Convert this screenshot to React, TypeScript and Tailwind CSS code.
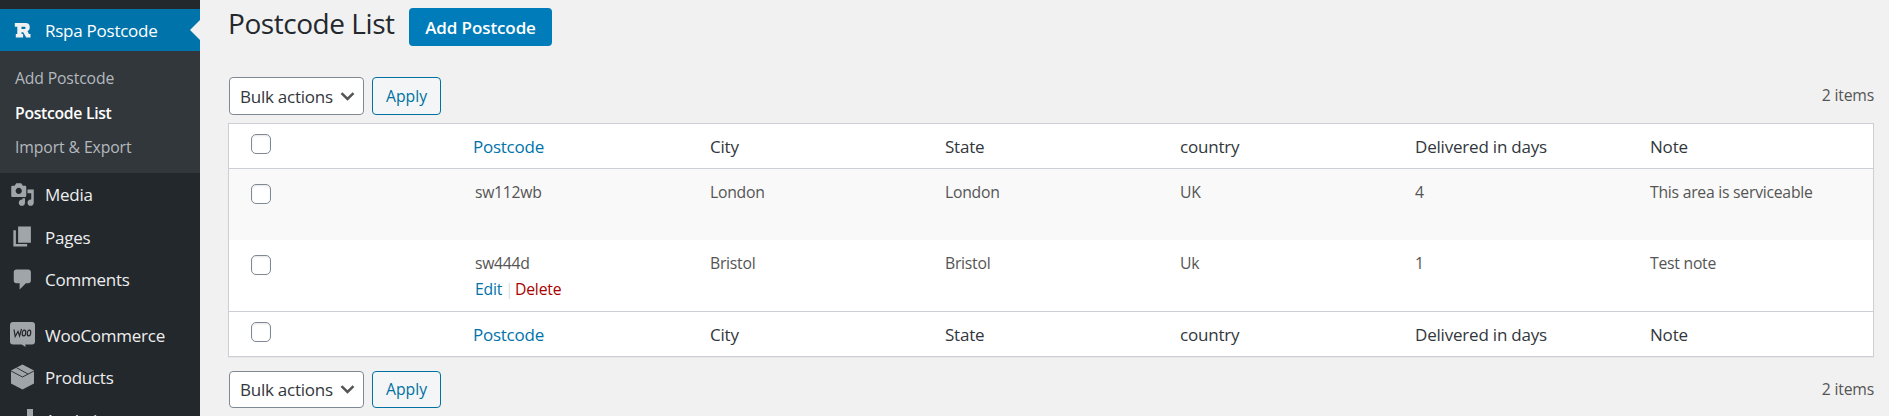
import type { ReactNode } from "react";

const columns = ["City", "State", "country", "Delivered in days", "Note"];

const Checkbox = ({ className }: { className: string }) => (
  <span
    className={`ml-[22px] block h-5 w-5 rounded-[5px] border border-[#7e8993] bg-white shadow-[inset_0_1px_2px_rgba(0,0,0,0.1)] ${className}`}
  />
);

const grid = "grid grid-cols-[237px_237px_235px_235px_235px_235px_1fr]";

function HeadRow() {
  return (
    <div className={`${grid} h-11 text-[17px] leading-[46px] text-[#32373c]`}>
      <Checkbox className="mt-2.5" />
      <span className="pl-[7px] tracking-[-0.25px] text-[#0073aa]">Postcode</span>
      {columns.map((c) => (
        <span key={c} className="pl-[7px] tracking-[-0.2px]">
          {c}
        </span>
      ))}
    </div>
  );
}

function Row({ cells, className, actions }: { cells: string[]; className: string; actions?: boolean }) {
  return (
    <div className={`${grid} h-[71px] pt-[11px] text-[15.75px] leading-[24px] text-[#555] ${className}`}>
      <Checkbox className="mt-1" />
      {cells.map((c, i) => (
        <div key={i} className={i === 0 ? "pl-[9px] tracking-[-0.3px]" : "pl-[7px] tracking-[-0.25px]"}>
          {c}
          {i === 0 && actions && (
            <div className="flex leading-[29px] tracking-[-0.2px]">
              <span className="w-[30px] text-[#0073aa]">Edit</span>
              <span className="w-[10px] text-[#ddd]">|</span>
              <span className="text-[#a00]">Delete</span>
            </div>
          )}
        </div>
      ))}
    </div>
  );
}

function TableNav({ className }: { className: string }) {
  return (
    <div className={`ml-px flex w-[1645px] items-center ${className}`}>
      <div className="flex h-full w-[135px] items-center rounded-[4px] border border-[#7e8993] bg-white pl-2.5 text-[17px] tracking-[-0.25px] text-[#32373c]">
        <span className="w-[100px] whitespace-nowrap pt-px">Bulk actions</span>
        <svg width="15" height="9" viewBox="0 0 15 9" fill="none" stroke="#555" strokeWidth="2.5">
          <path d="M1.500 1.200 7.500 7 13.500 1.200" />
        </svg>
      </div>
      <div className="ml-2 flex h-full w-[69px] items-center justify-center rounded-[4px] border border-[#0071a1] bg-[#f3f5f6] pt-px text-[15.75px] text-[#0071a1]">
        Apply
      </div>
      <span className="ml-auto text-[15.75px] tracking-[-0.2px] text-[#555]">2 items</span>
    </div>
  );
}

const icons: Record<string, ReactNode> = {
  Media: (
    <path d="M13 11V4c0-.55-.45-1-1-1h-1.670L9 1H5L3.670 3H2c-.55 0-1 .45-1 1v7c0 .55.45 1 1 1h10c.55 0 1-.45 1-1zM7 4.500c1.380 0 2.500 1.120 2.500 2.500S8.380 9.500 7 9.500 4.500 8.380 4.500 7 5.620 4.500 7 4.500zM14 6h5v10.500c0 1.380-1.120 2.500-2.500 2.500S14 17.880 14 16.500s1.120-2.500 2.500-2.500c.17 0 .34.02.5.05V9h-3V6zm-4 8.050V13h2v3.500c0 1.380-1.120 2.500-2.500 2.500S7 17.880 7 16.500 8.120 14 9.500 14c.17 0 .34.02.5.05z" />
  ),
  Pages: <path d="M6.500 15V2h10.200v13H6.500zm-.8 1h8v2H2.700V5h2v11z" />,
  Comments: <path d="M5 2h9.700c1.100 0 2 .9 2 2v7c0 1.100-.9 2-2 2h-2l-5 5v-5H5c-1.100 0-2-.9-2-2V4c0-1.100.9-2 2-2z" />,
};

function DashIcon({ name }: { name: string }) {
  return (
    <svg width="25" height="25" viewBox="0 0 20 20" fill="#a0a5aa">
      {icons[name]}
    </svg>
  );
}

function MenuItem({ label, icon, className }: { label: string; icon: ReactNode; className?: string }) {
  return (
    <div className={`flex h-[42.5px] shrink-0 items-center pl-[10px] text-[17px] text-[#eee] ${className ?? ""}`}>
      <span className="flex w-[35px] shrink-0">{icon}</span>
      <span className="whitespace-nowrap pt-px tracking-[-0.25px]">{label}</span>
    </div>
  );
}

export default function App() {
  return (
    <div className="flex h-[416px] w-[1889px] overflow-hidden bg-[#f1f1f1] font-['Open_Sans',sans-serif]">
      <aside className="flex h-full w-[200px] shrink-0 flex-col overflow-hidden bg-[#23282d] pt-[9px]">
        <div className="flex h-[42px] shrink-0 items-center bg-[#0073aa] text-[17px] text-white">
          <svg className="ml-[14px] mr-[14px]" width="17" height="17" viewBox="0 0 17 17" fill="#f0f0f0">
            <path
              fillRule="evenodd"
              d="M.8 1h10.700c3 0 4.300 1.600 4.300 4.200 0 1.900-.8 3.200-2.300 3.900l1.400 2.900H16.500v3.600h-4.300L9.200 10.300H7.500V12h1.600v3.600H1.800V12h1.500V4.800H.8V1zm6.700 3.800v2.200h3c1.500 0 1.500-2.200 0-2.200h-3z"
            />
          </svg>
          <span className="pt-px tracking-[-0.25px]">Rspa Postcode</span>
          <svg className="ml-auto" width="10" height="20" viewBox="0 0 10 20" fill="#f1f1f1">
            <path d="M10 0v20L0 10z" />
          </svg>
        </div>
        <div className="flex h-[122px] shrink-0 flex-col bg-[#32373c] pl-[15px] pt-[10px] text-[15.75px] leading-[34.5px] text-[#b4b9be]">
          <span className="tracking-[-0.15px]">Add Postcode</span>
          <span className="font-semibold tracking-[-0.3px] text-white">Postcode List</span>
          <span className="tracking-[-0.1px]">Import &amp; Export</span>
        </div>
        <MenuItem label="Media" icon={<DashIcon name="Media" />} />
        <MenuItem label="Pages" icon={<DashIcon name="Pages" />} />
        <MenuItem label="Comments" icon={<DashIcon name="Comments" />} />
        <MenuItem
          className="mt-[13px]"
          label="WooCommerce"
          icon={
            <svg width="25" height="25" viewBox="0 0 25 25">
              <path
                fill="#a0a5aa"
                d="M3 0h19a3 3 0 0 1 3 3v16.500a3 3 0 0 1-3 3h-6.700l.4 2.500-4-2.500H3a3 3 0 0 1-3-3V3a3 3 0 0 1 3-3z"
              />
              <g fill="none" stroke="#23282d" strokeWidth="1.200">
                <path d="m4 7.500 1.200 7L8 9.500l1.600 4.500L11.500 7" />
                <ellipse cx="14" cy="11" rx="1.700" ry="2.900" transform="rotate(8 14 11)" />
                <ellipse cx="19" cy="11" rx="1.700" ry="2.900" transform="rotate(8 19 11)" />
              </g>
            </svg>
          }
        />
        <MenuItem
          label="Products"
          icon={
            <svg width="25" height="26" viewBox="0 0 25 26">
              <path fill="#a0a5aa" d="M12.500.5 24 6.500v13L12.500 25.500 1 19.500v-13z" />
              <path fill="none" stroke="#23282d" strokeWidth=".9" d="m1 7 11.500 6L24 7M6.500 3.700 18 10" />
            </svg>
          }
        />
        <MenuItem
          label="Analytics"
          icon={
            <svg width="25" height="25" viewBox="0 0 25 25" fill="#a0a5aa">
              <path d="M3 15h5v9H3zM10 10h5v14h-5zM17 2h6v22h-6z" />
            </svg>
          }
        />
      </aside>
      <main className="flex flex-1 flex-col pl-7">
        <div className="flex h-[77px] pt-2">
          <h1 className="w-[181px] whitespace-nowrap text-[28px] leading-[31px] tracking-[-0.45px] text-[#23282d]">
            Postcode List
          </h1>
          <div className="flex h-[38px] w-[143px] items-center justify-center rounded-[4px] bg-[#007cba] pt-px text-[17px] font-semibold tracking-[-0.1px] text-white">
            Add Postcode
          </div>
        </div>
        <TableNav className="h-[38px]" />
        <div className="mt-2 w-[1646px] border border-[#ccd0d4] bg-white shadow-[0_1px_1px_rgba(0,0,0,0.04)]">
          <HeadRow />
          <div className="border-y border-[#ccd0d4]">
            <Row className="bg-[#f9f9f9]" cells={["sw112wb", "London", "London", "UK", "4", "This area is serviceable"]} />
            <Row className="" actions cells={["sw444d", "Bristol", "Bristol", "Uk", "1", "Test note"]} />
          </div>
          <HeadRow />
        </div>
        <TableNav className="mt-[14px] h-[37px]" />
      </main>
    </div>
  );
}
